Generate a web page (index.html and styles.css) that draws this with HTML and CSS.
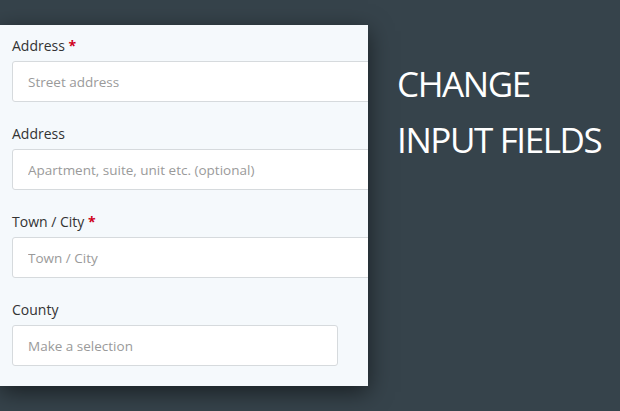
FILE: index.html
```html
<!DOCTYPE html>
<html lang="en">
<head>
    <meta charset="UTF-8">
    <meta name="viewport" content="width=device-width, initial-scale=1.0">
    <title>Change Input Fields</title>
    <link rel="stylesheet" href="styles.css">
</head>
<body>
    <div class="scene">
        <!-- Checkout form panel -->
        <form class="address-panel">
            <div class="field">
                <label class="field-label">Address <span class="required">*</span></label>
                <input class="field-input wide" type="text" placeholder="Street address">
            </div>
            <div class="field">
                <label class="field-label">Address</label>
                <input class="field-input wide" type="text" placeholder="Apartment, suite, unit etc. (optional)">
            </div>
            <div class="field">
                <label class="field-label">Town / City <span class="required">*</span></label>
                <input class="field-input wide" type="text" placeholder="Town / City">
            </div>
            <div class="field">
                <label class="field-label">County</label>
                <div class="field-input select-box">Make a selection</div>
            </div>
        </form>
        <!-- Title -->
        <h1 class="scene-title">CHANGE<br>INPUT FIELDS</h1>
    </div>
</body>
</html>
```

FILE: styles.css
```css
/* Global Styling */
body {
    margin: 0;
    background-color: #36434b;
    font-family: "Open Sans", "Noto Sans", sans-serif;
    overflow: hidden;
}
.scene {
    display: flex;
    align-items: flex-start;
    height: 411px;
}
/* Form panel */
.address-panel {
    width: 368px;
    height: 361px;
    margin-top: 25px;
    box-sizing: border-box;
    padding: 11px 0 0 12px;
    background-color: #f5f9fc;
    overflow: hidden;
    box-shadow: 0 6px 22px rgba(0, 0, 0, 0.55);
    flex-shrink: 0;
}
.field {
    display: flex;
    flex-direction: column;
    margin-bottom: 22px;
}
.field-label {
    font-size: 14px;
    line-height: 20px;
    color: #333;
    margin-bottom: 5px;
}
.required {
    color: #d0021b;
    font-weight: bold;
}
.field-input {
    box-sizing: border-box;
    height: 41px;
    padding: 0 15px;
    border: 1px solid #d6dadd;
    border-radius: 3px;
    background-color: #fff;
    font-family: inherit;
    font-size: 13.5px;
    color: #333;
    outline: none;
}
.field-input::placeholder {
    color: #9a9a9a;
}
.field-input.wide {
    width: 380px;
}
.select-box {
    width: 326px;
    display: flex;
    align-items: center;
    color: #9a9a9a;
}
/* Title */
.scene-title {
    margin: 56px 0 0 29px;
    font-size: 35px;
    font-weight: normal;
    letter-spacing: -1.4px;
    line-height: 56px;
    color: #fff;
}
```
